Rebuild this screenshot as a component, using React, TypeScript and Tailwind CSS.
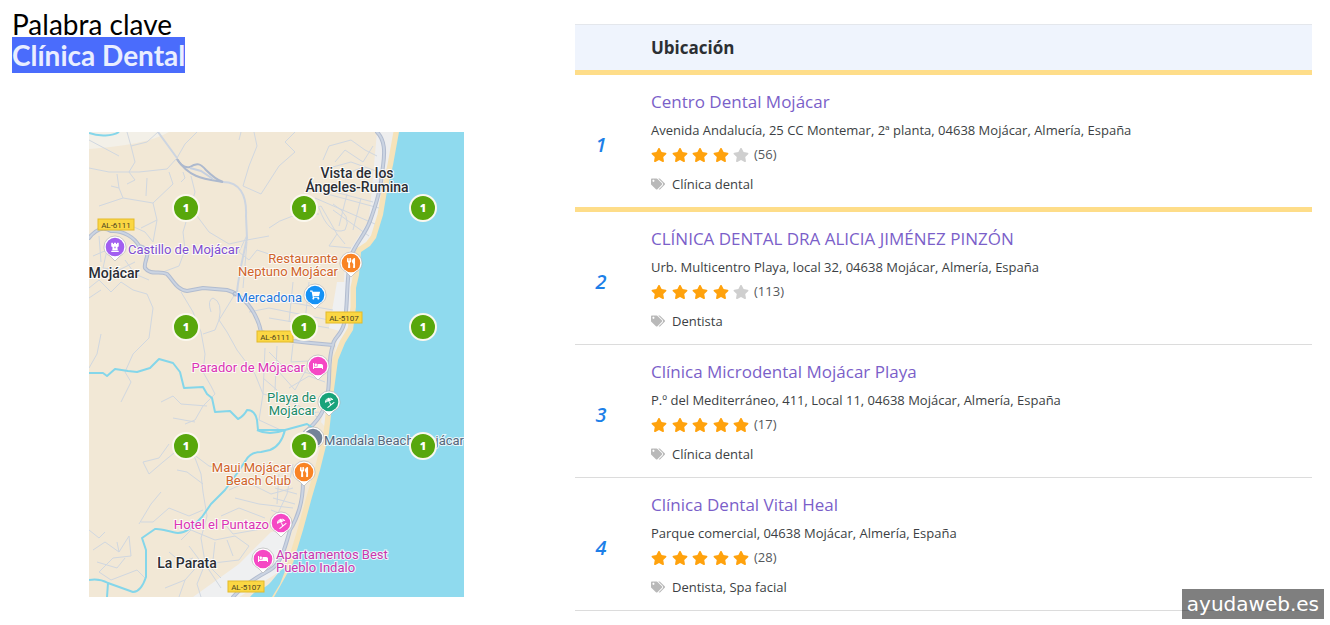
import { FaStar, FaTags, FaUtensils, FaShoppingCart, FaBed, FaUmbrellaBeach, FaChessRook } from "react-icons/fa";
import type { IconType } from "react-icons";

const results = [
  {
    position: 1,
    name: "Centro Dental Mojácar",
    address: "Avenida Andalucía, 25 CC Montemar, 2ª planta, 04638 Mojácar, Almería, España",
    stars: 4,
    reviews: 56,
    category: "Clínica dental",
    highlighted: true,
  },
  {
    position: 2,
    name: "CLÍNICA DENTAL DRA ALICIA JIMÉNEZ PINZÓN",
    address: "Urb. Multicentro Playa, local 32, 04638 Mojácar, Almería, España",
    stars: 4,
    reviews: 113,
    category: "Dentista",
    highlighted: false,
  },
  {
    position: 3,
    name: "Clínica Microdental Mojácar Playa",
    address: "P.º del Mediterráneo, 411, Local 11, 04638 Mojácar, Almería, España",
    stars: 5,
    reviews: 17,
    category: "Clínica dental",
    highlighted: false,
  },
  {
    position: 4,
    name: "Clínica Dental Vital Heal",
    address: "Parque comercial, 04638 Mojácar, Almería, España",
    stars: 5,
    reviews: 28,
    category: "Dentista, Spa facial",
    highlighted: false,
  },
];

const markers = [76, 195, 314].flatMap((y) => [97, 215, 334].map((x) => ({ x, y })));

const minorRoads = [
  "M38 0 L42 14 L58 10 L69 0 M42 14 L46 30 L40 40 L46 48 L38 52",
  "M0 36 L20 40 L50 40 L78 37 L88 26 L96 12 L108 0",
  "M28 42 L30 56 L22 54 M30 56 L34 66 L64 71 L84 52 L80 40 M58 46 L57 64 M10 74 L34 66",
  "M64 71 L68 88 L64 110 L56 100 L34 90 M68 88 L52 96",
  "M102 44 L106 60 L100 80 L94 100 L96 118 L90 134 L74 140 M92 50 L96 46 L94 40",
  "M108 84 L120 100 L140 112 L158 108 L180 104 M165 0 L168 14 L160 34 L154 54 L172 62 L190 34 L206 20 L196 10 L206 0",
  "M158 103 L150 120 L160 128 L168 118 L180 122 M158 110 L154 156 M152 0 L150 8",
  "M234 28 L240 14 L262 8 L276 18 L288 24 M246 30 L256 18 L274 30 L284 14 M240 36 L262 30 L290 40 M252 44 L272 36",
  "M216 56 L290 76 M226 66 L286 92 M238 58 L284 70 M244 78 L280 104 M258 62 L250 94 M272 66 L264 98 M230 76 Q240 104 256 98 Q264 84 244 72",
  "M214 82 L232 74 L248 102 L256 112 M180 96 Q200 80 230 82 M248 102 L240 114 L262 116",
  "M0 156 L10 148 L22 160 L32 150 L44 158 L58 162 L64 176 L60 206 L44 222 L36 240 L42 250 L36 262 L32 270 M0 166 L12 158 M12 202 L8 222 L0 236",
  "M92 160 L104 180 L112 200 L116 222 L114 240 L122 254 L126 262 L114 274 L106 288 L96 292 M84 286 L106 290",
  "M114 202 L126 198 L130 188 L138 200 L148 218 L166 242 L174 262 L170 288 L196 300 M122 180 Q118 168 124 166 Q134 170 130 188 L146 162",
  "M72 270 L84 264 L92 272 L118 274 M160 180 L180 176 L240 188 M180 186 L240 196 M176 166 L244 178 M204 150 L200 190 M220 150 L216 190",
  "M176 216 L174 262 L200 268 L230 286 M180 220 L196 236 L232 244 M188 214 L186 258 M204 212 L202 230 L236 228 M200 256 L220 244 L236 250",
  "M184 278 L214 282 L230 280 M190 240 L206 258 L218 236 M174 246 L188 258",
  "M80 312 L70 326 L54 330 L60 342 L74 330 L96 312 L106 326 L112 342 L114 360 L118 384 L112 406 L116 430 L132 446",
  "M88 338 L98 340 L114 352 M104 322 L120 334 L140 338 M50 392 L62 372 L72 360 M52 390 L64 390 L80 376 L100 384 L114 378",
  "M0 398 L10 406 L16 400 M4 418 L16 410 L30 420 L40 404 L42 424 L24 426 L10 440 L22 448 L48 438 L56 446 M8 430 L28 436 L36 426 M30 420 L28 410",
  "M140 358 L158 350 L182 362 L204 356 M146 366 L170 372 L204 376 M132 384 L150 376 L176 386 M134 390 L144 402 L178 396",
  "M92 408 L102 398 L126 408 L146 404 L160 414 L150 428 L116 432 M100 414 L112 430 L96 448 L90 465 M116 432 L108 452 L112 465 M126 410 L124 428 M116 432 L132 456",
  "M138 408 L144 424 M80 420 L92 430 L104 426 M204 332 L198 362 L184 392 M190 342 L188 372",
  "M186 356 L208 362 M184 366 L206 372 M182 378 L202 386 M0 8 L30 24 M76 456 L96 448",
  "M4 124 L18 118 L14 136 L30 138 L46 130 M36 128 L46 142 L60 148 M10 104 L12 130",
];

const mapLabels = [
  { text: "Castillo de Mojácar", x: 39, y: 122, color: "#7f4fd0" },
  { text: "Restaurante", x: 249, y: 131, color: "#d0642a", end: true },
  { text: "Neptuno Mojácar", x: 249, y: 144, color: "#d0642a", end: true },
  { text: "Mercadona", x: 213, y: 170, color: "#1e77dc", end: true },
  { text: "Parador de Mójacar", x: 216, y: 240, color: "#db34b4", end: true },
  { text: "Playa de", x: 227, y: 270, color: "#1c8a66", end: true },
  { text: "Mojácar", x: 227, y: 283, color: "#1c8a66", end: true },
  { text: "Mandala Beach Mojácar", x: 375, y: 313, color: "#55677c", end: true },
  { text: "Maui Mojácar", x: 202, y: 340, color: "#d0642a", end: true },
  { text: "Beach Club", x: 202, y: 353, color: "#d0642a", end: true },
  { text: "Hotel el Puntazo", x: 180, y: 397, color: "#db34b4", end: true },
  { text: "Apartamentos Best", x: 187, y: 427, color: "#c936ae" },
  { text: "Pueblo Indalo", x: 187, y: 440, color: "#c936ae" },
];

const towns = [
  { text: "Vista de los", x: 268, y: 46 },
  { text: "Ángeles-Rumina", x: 268, y: 60 },
  { text: "Mojácar", x: 25, y: 146 },
  { text: "La Parata", x: 98, y: 436 },
];

const roadSigns = [
  { text: "AL-6111", x: 9, y: 87 },
  { text: "AL-5107", x: 237, y: 180 },
  { text: "AL-6111", x: 168, y: 199 },
  { text: "AL-5107", x: 139, y: 449 },
];

const pins: { x: number; y: number; color: string; icon?: IconType; tilt?: number }[] = [
  { x: 26, y: 115, color: "#a25ff0", icon: FaChessRook },
  { x: 262, y: 131, color: "#f98425", icon: FaUtensils },
  { x: 226, y: 163, color: "#1592f5", icon: FaShoppingCart },
  { x: 229, y: 234, color: "#f548c4", icon: FaBed },
  { x: 240, y: 270, color: "#18a37a", icon: FaUmbrellaBeach, tilt: -40 },
  { x: 224, y: 306, color: "#738398" },
  { x: 215, y: 340, color: "#f98425", icon: FaUtensils },
  { x: 192, y: 391, color: "#f548c4", icon: FaUmbrellaBeach, tilt: -40 },
  { x: 174, y: 427, color: "#f548c4", icon: FaBed },
];

const mainRoads = [
  "M288 0 C296 8 296 20 294 34 C292 56 288 70 281 89 C276 104 262 116 261 130 C257 150 259 180 255 192 C252 204 244 206 244 213 C238 228 242 250 238 265 C236 280 226 292 216 300",
  "M214 350 C214 374 206 390 201 398 C196 416 192 432 181 438 C166 446 152 456 144 465",
  "M0 106 C6 98 14 94 22 99 C34 98 46 106 50 114 C66 118 54 128 56 136 C62 144 70 138 78 142 C84 148 88 158 98 159 L114 156 L138 158 C154 162 168 180 172 200 L204 209 L222 211 L244 213",
];

function LocalMap() {
  return (
    <svg viewBox="0 0 375 465" className="block w-full" role="img" aria-label="Mojácar">
      <rect width="375" height="465" fill="#f2e8d6" />
      <path d="M0 0 H80 C62 10 36 14 0 17 Z" fill="#f3f0e8" />
      <path d="M288 0 L312 0 L304 60 L280 112 L262 122 L264 200 L244 240 L240 300 L232 290 L246 220 L254 170 L256 126 L280 88 Z" fill="#eeeeee" />
      <path d="M262 150 H248 L240 196 L254 200 Z M104 465 L150 432 L182 400 L204 396 L190 440 L150 465 Z" fill="#eff0f1" />
      <path
        d="M310 0 L304 33 L298 59 L294 83 L287 106 L281 114 L272 120 L270 143 L267 156 L267 175 L264 198 L256 211 L249 228 L244 265 L240 301 L236 318 L231 338 L223 365 L214 398 L204 431 L189 458 L185 465 H375 V0 Z"
        fill="#8fdaee"
        stroke="#f6e3ba"
        strokeWidth="11"
      />
      <path
        d="M310 0 L304 33 L298 59 L294 83 L287 106 L281 114 L272 120 L270 143 L267 156 L267 175 L264 198 L256 211 L249 228 L244 265 L240 301 L236 318 L231 338 L223 365 L214 398 L204 431 L189 458 L185 465 H375 V0 Z"
        fill="#8fdaee"
      />
      <path d="M161 465 C168 456 174 458 180 452 C186 446 190 438 198 434 L191 452 L183 465 Z" fill="#8fdaee" />

      <g fill="none" stroke="#d0d7e0" strokeWidth="1" strokeLinejoin="round">
        {minorRoads.map((d) => (
          <path key={d} d={d} />
        ))}
      </g>
      <g fill="none" stroke="#cdd5e1" strokeWidth="2">
        <path d="M69 0 L88 26 M134 50 C150 50 158 62 157 84 L158 106 C154 126 150 140 148 160" />
      </g>
      <g fill="none" stroke="#adb9ce" strokeWidth="2">
        <path d="M88 27 C92 34 97 36 101 35 C108 30 112 32 117 38 C122 43 128 48 134 50" />
        <path d="M88 27 C100 46 116 47 134 50" />
        <path d="M101 36 L112 39 L124 47" stroke="#c6d0e0" />
      </g>

      <g fill="none" strokeLinecap="round" strokeLinejoin="round">
        {mainRoads.map((d) => (
          <path key={d} d={d} stroke="#b2bccf" strokeWidth="4" />
        ))}
        {mainRoads.map((d) => (
          <path key={d} d={d} stroke="#cbd4e2" strokeWidth="2" />
        ))}
        <circle cx="146" cy="162" r="2" stroke="#aab5ca" />
      </g>

      <g fill="none" stroke="#84d6ea" strokeWidth="2" strokeLinejoin="round">
        <path d="M0 1 C10 5 24 4 30 0" />
        <path d="M0 241 L14 241 L18 244 L26 237 L39 239 L48 240 L61 236 L70 227 L84 231 L91 240 L95 256 L114 255 L118 262 L123 266 L126 280 L141 279 L149 287 Q155 284 158 278 Q166 278 168 288 L169 298 L196 298 L218 292 L230 300" />
        <path d="M168 298 Q180 304 196 298 Q192 314 181 318 L172 320 Q162 320 157 328 L149 340 L136 358 L122 372 L113 385 C104 394 98 401 89 401 C80 400 72 396 66 397 L53 406 L57 418 L57 445 Q52 460 44 460 L19 451 Q10 446 0 448 M19 451 L18 465" />
      </g>

      {roadSigns.map((sign) => (
        <g key={`${sign.x}-${sign.y}`}>
          <rect x={sign.x} y={sign.y} width="36" height="11" fill="#fbd743" stroke="#e3ba2a" />
          <text x={sign.x + 18} y={sign.y + 9} textAnchor="middle" className="font-['Roboto',sans-serif] text-[8px]" fill="#4c4420">
            {sign.text}
          </text>
        </g>
      ))}

      {pins.map(({ x, y, color, icon: Icon, tilt = 0 }) => (
        <g key={`${x}-${y}`}>
          <path
            d={`M${x - 11} ${y} a11 11 0 1 1 22 0 c0 5 -3 7 -6 9 l-5 5 l-5 -5 c-3 -2 -6 -4 -6 -9 Z`}
            fill="#fff"
            stroke="#a9a9a9"
            strokeWidth="0.6"
          />
          <circle cx={x} cy={y} r="9.3" fill={color} />
          {Icon && (
            <g transform={`rotate(${tilt} ${x} ${y})`}>
              <Icon x={x - 5} y={y - 5} size={10} color="#fff" />
            </g>
          )}
        </g>
      ))}

      {mapLabels.map((label) => (
        <text
          key={`${label.x}-${label.y}`}
          x={label.x}
          y={label.y}
          textAnchor={label.end ? "end" : "start"}
          fill={label.color}
          stroke="#fff"
          strokeOpacity="0.8"
          strokeWidth="2"
          paintOrder="stroke"
          className="font-['Roboto',sans-serif] text-[13px]"
        >
          {label.text}
        </text>
      ))}
      {towns.map((town) => (
        <text
          key={town.text}
          x={town.x}
          y={town.y}
          textAnchor="middle"
          fill="#2b2d33"
          stroke="#fff"
          strokeOpacity="0.9"
          strokeWidth="2"
          paintOrder="stroke"
          className="font-['Roboto',sans-serif] text-[14px] font-medium"
        >
          {town.text}
        </text>
      ))}

      {markers.map(({ x, y }) => (
        <g key={`${x}-${y}`}>
          <circle cx={x} cy={y} r="13" fill="#58a70c" stroke="#fbf8ee" strokeWidth="2" />
          <text x={x} y={y + 4} textAnchor="middle" fill="#fff" className="font-['Open_Sans',sans-serif] text-[11px] font-extrabold">
            1
          </text>
        </g>
      ))}
    </svg>
  );
}

export default function App() {
  return (
    <main className="relative grid min-h-screen grid-cols-[575fr_755fr] bg-white font-['Open_Sans','Noto_Sans',sans-serif]">
      <section className="pt-3 pr-4 pl-3">
        <h1 className="font-['Lato',sans-serif] text-[28px] text-black">
          <span className="block leading-[25px]">Palabra clave</span>
          <span className="block w-fit bg-[#4a6cfc] leading-9 font-bold text-[#e9eeff]">Clínica Dental</span>
        </h1>
        <div className="mt-[59px] ml-[77px] max-w-[375px]">
          <LocalMap />
        </div>
      </section>

      <section className="pt-6 pr-[18px]">
        <table className="w-full border-separate border-spacing-0 text-left text-[#3c3f44]">
          <thead>
            <tr className="bg-[#eff4fd]">
              <th className="w-[76px] border-t border-b-[5px] border-t-[#e4e7ec] border-b-[#fedd89]" aria-label="Posición"></th>
              <th className="border-t border-b-[5px] border-t-[#e4e7ec] border-b-[#fedd89] text-[17px] leading-[45px] font-bold text-[#2c2f33]">
                Ubicación
              </th>
            </tr>
          </thead>
          <tbody>
            {results.map((item) => {
              const border = item.highlighted ? "border-b-[5px] border-[#fedd89]" : "border-b border-[#dcdcdc]";
              return (
                <tr key={item.position}>
                  <td className={`pt-2 pr-6 text-center text-[20px] font-semibold text-[#1d7fe8] italic ${border}`}>
                    {item.position}
                  </td>
                  <td className={`pt-3 pb-[9px] ${border}`}>
                    <a href="#" className="block text-[17px] leading-[29px] text-[#7b5fc9]">
                      {item.name}
                    </a>
                    <p className="text-[13px] leading-7">{item.address}</p>
                    <div className="flex items-center gap-[5px] leading-[21px]">
                      <div className="flex w-[98px] justify-between">
                        {[1, 2, 3, 4, 5].map((n) => (
                          <FaStar key={n} className={n <= item.stars ? "size-4 text-[#ffa20d]" : "size-4 text-[#cfcfcf]"} />
                        ))}
                      </div>
                      <span className="text-[13px] text-[#55585c]">({item.reviews})</span>
                    </div>
                    <p className="mt-[5px] flex items-center gap-[7px] text-[13px] leading-7">
                      <FaTags className="size-[14px] text-[#b9b9b9]" />
                      {item.category}
                    </p>
                  </td>
                </tr>
              );
            })}
          </tbody>
        </table>
      </section>

      <div className="absolute right-[6px] bottom-[6px] bg-black/50 px-[5px] font-['DejaVu_Sans',sans-serif] text-[20px] leading-[30px] text-white">
        ayudaweb.es
      </div>
    </main>
  );
}
